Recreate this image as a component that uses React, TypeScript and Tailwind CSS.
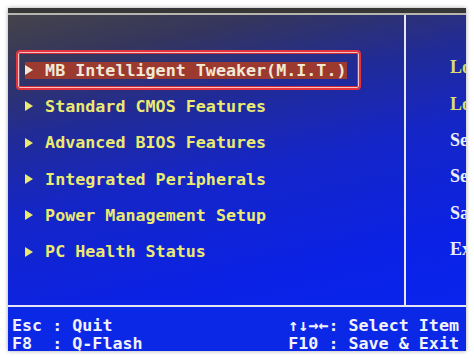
const menu = [
  'Standard CMOS Features',
  'Advanced BIOS Features',
  'Integrated Peripherals',
  'Power Management Setup',
  'PC Health Status',
];

const side = [
  { label: 'Load Fail-Safe Defaults', yellow: true },
  { label: 'Load Optimized Defaults', yellow: true },
  { label: 'Set Supervisor Password', yellow: false },
  { label: 'Set User Password', yellow: false },
  { label: 'Save & Exit Setup', yellow: false },
  { label: 'Exit Without Saving', yellow: false },
];

function Pointer() {
  return (
    <svg width="8" height="10" viewBox="0 0 8 10" className="block">
      <path d="M0 0L8 5L0 10Z" fill="currentColor" />
    </svg>
  );
}

export default function App() {
  return (
    <div className="h-[359px] w-[474px] overflow-hidden bg-white pl-2 pt-2">
      <div className="flex h-[343px] w-[458px] flex-col shadow-[0_0_4px_rgba(0,0,0,0.35)] font-['DejaVu_Sans_Mono',monospace] font-bold">
        {/* bezel strip */}
        <div className="h-[5px] bg-[#373737]" />
        <div className="h-[2px] bg-[#b6b6ae]" />

        <div className="flex h-[290px] bg-[linear-gradient(168deg,#45434b_0%,#35365c_14%,#212b96_32%,#1526c6_52%,#0b22e4_80%,#0a24ee_100%)]">
          {/* main menu */}
          <div className="w-[396px] shrink-0 pl-2 pt-[37px] text-[16.7px] leading-none">
            <div className="-my-0.5 flex h-10 w-[345px] items-center rounded-[4px] border-2 border-[#e2333f] pl-[7px] shadow-[inset_0_0_0_1px_#f3c2c4,inset_0_0_0_2px_#cf2a36]">
              <div className="flex h-[17px] items-center bg-[#9c3a30] text-[#f3e8d4]">
                <span className="flex w-[20.1px] shrink-0">
                  <Pointer />
                </span>
                <span className="whitespace-pre">MB Intelligent Tweaker(M.I.T.)</span>
              </div>
            </div>
            {menu.map((item) => (
              <div key={item} className="flex h-[36.4px] items-center pl-[9px] text-[#ecea70]">
                <span className="flex w-[20.1px] shrink-0">
                  <Pointer />
                </span>
                <span className="whitespace-pre">{item}</span>
              </div>
            ))}
          </div>

          <div className="w-[2px] shrink-0 bg-[#e6e6f2]" />

          {/* right column */}
          <div className="flex-1 overflow-hidden pl-[44px] pt-[34px] font-['Liberation_Serif',serif] text-[18px] leading-none">
            {side.map((s) => (
              <div
                key={s.label}
                className={`flex h-[36.4px] items-center whitespace-nowrap ${s.yellow ? 'text-[#dcdc74]' : 'text-[#eeeef8]'}`}
              >
                {s.label}
              </div>
            ))}
          </div>
        </div>

        <div className="h-[2px] bg-[#e6e6f2]" />

        {/* key help bar */}
        <div className="flex flex-1 justify-between overflow-hidden bg-[#0b28e6] pl-1 pr-[7px] pt-[9px] text-[16.7px] leading-[18px] text-[#f2f2ff]">
          <div className="whitespace-pre">
            <div>Esc : Quit</div>
            <div>F8  : Q-Flash</div>
          </div>
          <div className="whitespace-pre">
            <div>↑↓→←: Select Item</div>
            <div>F10 : Save &amp; Exit</div>
          </div>
        </div>
      </div>
    </div>
  );
}
